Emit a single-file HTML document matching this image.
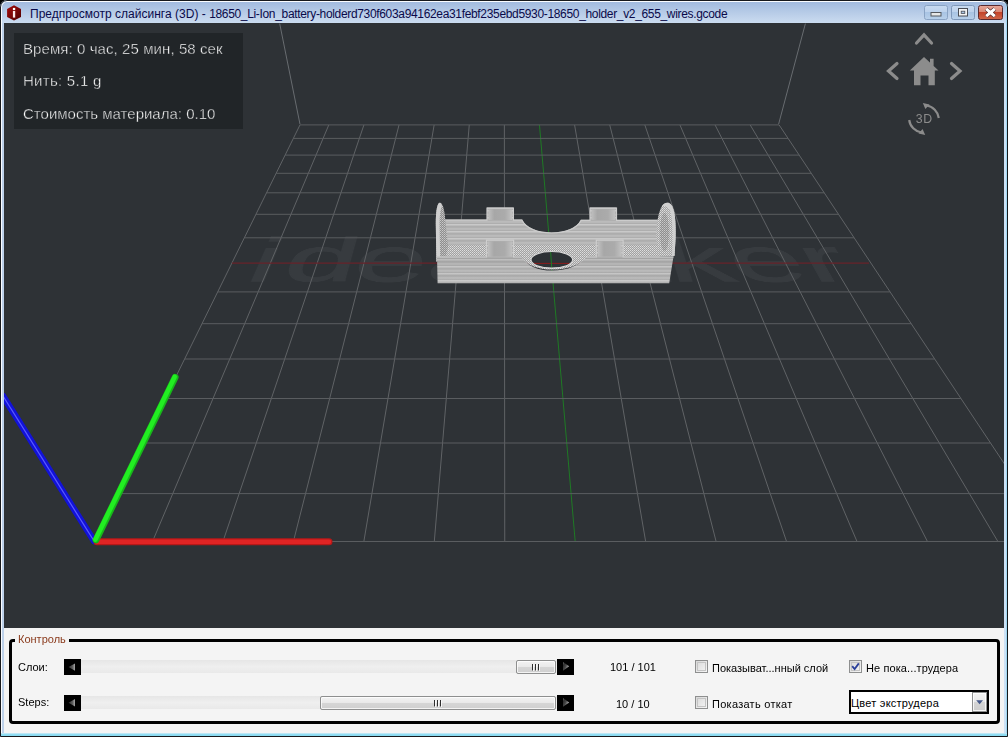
<!DOCTYPE html>
<html><head><meta charset="utf-8">
<style>
*{box-sizing:border-box;margin:0;padding:0}
html,body{width:1008px;height:737px;overflow:hidden;background:#000}
body{font-family:"Liberation Sans",sans-serif;position:relative}
#win{position:absolute;left:0;top:0;width:1008px;height:737px;background:#bdd1ea;border-radius:7px 7px 0 0;overflow:hidden}
#frame-dark{position:absolute;left:0;top:0;width:1008px;height:737px;border:1px solid #16181c;border-radius:7px 7px 0 0;pointer-events:none}
#frame-white{position:absolute;left:1px;top:1px;width:1006px;height:735px;border:1px solid #fafcff;border-radius:6px 6px 0 0;border-bottom-color:#7fd4f0;border-right-color:#9fd8f2}
#tbar{position:absolute;left:2px;top:2px;width:1004px;height:21px;background:linear-gradient(#a2bbdf,#b9cde8 55%,#cbdcf0)}
#title{position:absolute;left:30px;top:7px;font-size:12px;line-height:14px;color:#0a0a4a;white-space:nowrap}
#vp{position:absolute;left:4px;top:23px;width:1000px;height:605px;background:#2e3236;overflow:hidden}
#scene{position:absolute;left:-4px;top:-23px}
#info{position:absolute;left:10px;top:10px;width:229px;height:96px;background:#212528}
.il{position:absolute;left:9px;color:#fff;font-size:15px;line-height:17px;white-space:nowrap;-webkit-text-stroke:.4px #212528}
#panel{position:absolute;left:4px;top:628px;width:1000px;height:105px;background:#f4f4f4}
#bot{position:absolute;left:1px;top:733px;width:1006px;height:3px;background:linear-gradient(#d8edf7,#93ddf2 40%,#86d9f0)}
#gb{position:absolute;left:9px;top:639px;width:991px;height:85px;border:3px solid #000;border-radius:4px}
#gbt{position:absolute;left:15px;top:632px;width:54px;height:14px;background:#f4f4f4;color:#8a3a1c;font-size:11px;line-height:14px;padding-left:3px;white-space:nowrap}
.lb{position:absolute;font-size:11px;line-height:13px;color:#000;white-space:nowrap}
.ab{position:absolute;width:17px;height:16px;background:#000}
.trk{position:absolute;height:13px;background:linear-gradient(#e6e6e6,#efefef 50%,#e9e9e9)}
.hd{position:absolute;height:14px;border:1px solid #8e8f8f;border-radius:2px;box-shadow:inset 0 0 0 1px rgba(255,255,255,.75);background:linear-gradient(#f3f3f3,#e9e9e9 48%,#d6d6d6 52%,#cfcfcf)}
.cb{position:absolute;width:13px;height:13px;border:1px solid #8e8f8f;background:linear-gradient(135deg,#d8d8d8,#f6f6f6)}
.cb i{position:absolute;left:1px;top:1px;width:9px;height:9px;border:1px solid #c4c4c4;display:block}
</style></head><body>
<div id="win">
<div id="tbar"></div>
<div id="frame-white"></div>
<div id="frame-dark"></div>
<svg style="position:absolute;left:6px;top:4px" width="16" height="18" viewBox="0 0 16 18"><defs><linearGradient id="ic" x1="0" y1="0" x2="1" y2="1"><stop offset="0" stop-color="#a80c0c"/><stop offset="1" stop-color="#4c0000"/></linearGradient></defs><polygon points="8,1.2 15,5 15,13 8,16.6 1.1,13 1.1,5" fill="url(#ic)"/><rect x="6.9" y="7" width="2.3" height="6.6" fill="#fbeaea"/><rect x="6.9" y="3.9" width="2.3" height="2.2" fill="#fff"/></svg>
<div id="title"><span id="ta" style="letter-spacing:.02px">Предпросмотр слайсинга (3D) - </span><span id="tb" style="letter-spacing:-.334px">18650_Li-Ion_battery-holderd730f603a94162ea31febf235ebd5930-18650_holder_v2_655_wires.gcode</span></div>
<!-- caption buttons -->
<svg style="position:absolute;left:924px;top:5px" width="80" height="16" viewBox="0 0 80 16">
<defs><linearGradient id="bb" x1="0" y1="0" x2="0" y2="1"><stop offset="0" stop-color="#c9dbf0"/><stop offset=".5" stop-color="#bcd1ec"/><stop offset=".5" stop-color="#a9c4e4"/><stop offset="1" stop-color="#b9d0ea"/></linearGradient>
<linearGradient id="rb" x1="0" y1="0" x2="0" y2="1"><stop offset="0" stop-color="#e7a99b"/><stop offset=".5" stop-color="#d98470"/><stop offset=".5" stop-color="#c4442a"/><stop offset="1" stop-color="#d0674a"/></linearGradient></defs>
<rect x="0.5" y="0.5" width="23" height="14" rx="2" fill="url(#bb)" stroke="#8aa3c4"/>
<rect x="7" y="7.5" width="10" height="3.5" fill="#e8e8e8" stroke="#55585e" stroke-width="1"/>
<rect x="27.5" y="0.5" width="23" height="14" rx="2" fill="url(#bb)" stroke="#7f98ba"/>
<rect x="34.5" y="3.5" width="9" height="7.5" fill="#f4f4f4" stroke="#4a4d55" stroke-width="1"/><rect x="37.2" y="6.2" width="3.6" height="2.2" fill="#a9c4e4" stroke="#4a4d55" stroke-width=".8"/>
<rect x="54.5" y="0.5" width="24" height="14" rx="2" fill="url(#rb)" stroke="#5a2a2e"/>
<path d="M62.2 3.8 L70.8 11.2 M70.8 3.8 L62.2 11.2" stroke="#5a3030" stroke-width="4.4"/><path d="M62.2 3.8 L70.8 11.2 M70.8 3.8 L62.2 11.2" stroke="#fff" stroke-width="2.9"/>
</svg>

<div id="vp">
<div id="wmwrap" style="position:absolute;left:-4px;top:-23px;width:1008px;height:737px"><div id="wm3" style="position:absolute;left:0;top:0;width:1100px;height:230px;transform-origin:0 0;transform:matrix3d(1,0,0,0, -0.522280,0.299482,0,-0.00103627, 0,0,1,0, 327.6000,353.6500,0,1.6500)"><svg width="1100" height="230" viewBox="0 0 1100 230" style="position:absolute;left:0;top:0;overflow:visible"><text id="wmt" x="0" y="0" transform="translate(123.6,186.5) scale(1.184,1)" font-family="Liberation Sans" font-size="165" fill="#373b3f" stroke="#373b3f" stroke-width="1.5">i<tspan dx="7.5">d</tspan><tspan dx="-4">ea</tspan><tspan dx="-18">Maker</tspan></text></svg></div></div>
<svg id="scene" width="1008" height="737" viewBox="0 0 1008 737" shape-rendering="auto">
<g stroke-width="1" fill="none">
<!-- walls -->
<line x1="300" y1="124.3" x2="279.7" y2="23.6" stroke="#686c70"/>
<line x1="778.6" y1="124.2" x2="805.4" y2="23.6" stroke="#686c70"/>
<line x1="300.00" y1="124.90" x2="94.67" y2="541.50" stroke="#606366"/>
<line x1="328.82" y1="124.90" x2="152.50" y2="541.50" stroke="#606366"/>
<line x1="363.93" y1="124.90" x2="222.95" y2="541.50" stroke="#606366"/>
<line x1="399.04" y1="124.90" x2="293.40" y2="541.50" stroke="#606366"/>
<line x1="434.15" y1="124.90" x2="363.85" y2="541.50" stroke="#606366"/>
<line x1="469.26" y1="124.90" x2="434.30" y2="541.50" stroke="#606366"/>
<line x1="504.37" y1="124.90" x2="504.75" y2="541.50" stroke="#606366"/>
<line x1="539.48" y1="124.90" x2="575.20" y2="541.50" stroke="#1f7a25"/>
<line x1="574.59" y1="124.90" x2="645.65" y2="541.50" stroke="#606366"/>
<line x1="609.71" y1="124.90" x2="716.10" y2="541.50" stroke="#606366"/>
<line x1="644.82" y1="124.90" x2="786.55" y2="541.50" stroke="#606366"/>
<line x1="679.93" y1="124.90" x2="857.00" y2="541.50" stroke="#606366"/>
<line x1="715.04" y1="124.90" x2="927.45" y2="541.50" stroke="#606366"/>
<line x1="750.15" y1="124.90" x2="997.90" y2="541.50" stroke="#606366"/>
<line x1="779.10" y1="124.90" x2="1055.99" y2="541.50" stroke="#606366"/>
<line x1="300.00" y1="124.90" x2="779.10" y2="124.90" stroke="#5a5d60"/>
<line x1="293.35" y1="138.40" x2="788.07" y2="138.40" stroke="#5a5d60"/>
<line x1="285.12" y1="155.10" x2="799.17" y2="155.10" stroke="#5a5d60"/>
<line x1="276.14" y1="173.30" x2="811.27" y2="173.30" stroke="#5a5d60"/>
<line x1="266.53" y1="192.80" x2="824.23" y2="192.80" stroke="#5a5d60"/>
<line x1="255.94" y1="214.30" x2="838.52" y2="214.30" stroke="#5a5d60"/>
<line x1="244.35" y1="237.80" x2="854.14" y2="237.80" stroke="#5a5d60"/>
<line x1="217.69" y1="291.90" x2="890.10" y2="291.90" stroke="#5a5d60"/>
<line x1="202.02" y1="323.70" x2="911.23" y2="323.70" stroke="#5a5d60"/>
<line x1="184.62" y1="359.00" x2="934.70" y2="359.00" stroke="#5a5d60"/>
<line x1="165.15" y1="398.50" x2="960.95" y2="398.50" stroke="#5a5d60"/>
<line x1="143.22" y1="443.00" x2="990.53" y2="443.00" stroke="#5a5d60"/>
<line x1="118.28" y1="493.60" x2="1024.16" y2="493.60" stroke="#5a5d60"/>
<line x1="94.67" y1="541.50" x2="1055.99" y2="541.50" stroke="#5a5d60"/>
</g>
<line x1="232" y1="263.10" x2="869" y2="263.10" stroke="#68232a" stroke-width="1.3"/>
<!--MODEL-START-->
<defs>
<pattern id="str" width="8" height="7" patternUnits="userSpaceOnUse"><rect width="8" height="7" fill="#b7b7b7"/><rect y="0" width="8" height="1.3" fill="#c9c9c9"/><rect y="2.4" width="8" height="1" fill="#a6a6a6"/><rect y="4.6" width="8" height="1" fill="#c1c1c1"/><rect y="5.8" width="8" height=".9" fill="#ababab"/></pattern>
<pattern id="msh" width="2" height="2" patternUnits="userSpaceOnUse"><rect width="2" height="2" fill="#a2a2a2"/><rect width="1" height="1" fill="#dedede"/><rect x="1" y="1" width="1" height="1" fill="#cccccc"/></pattern>
<pattern id="mshd" width="2" height="2" patternUnits="userSpaceOnUse"><rect width="2" height="2" fill="#8e8e8e"/><rect width="1" height="1" fill="#c8c8c8"/><rect x="1" y="1" width="1" height="1" fill="#b4b4b4"/></pattern>
<linearGradient id="tabg" x1="0" y1="0" x2="1" y2="0"><stop offset="0" stop-color="#bfbfbf"/><stop offset=".25" stop-color="#a7a7a7"/><stop offset=".7" stop-color="#ababab"/><stop offset="1" stop-color="#c1c1c1"/></linearGradient>
<linearGradient id="fw" x1="0" y1="0" x2="0" y2="1"><stop offset="0" stop-color="#000" stop-opacity=".07"/><stop offset=".5" stop-color="#000" stop-opacity="0"/><stop offset="1" stop-color="#fff" stop-opacity=".10"/></linearGradient>
</defs>
<g id="model">
<!-- back wall -->
<path id="bw" d="M444 219.6 H487 V207.6 H513.4 V219.6 H522 C526 228 538 232.4 551.5 232.4 C565 232.4 577 228 581 219.8 H590 V207.6 H616.5 V219.8 H658 V246 H444 Z" fill="url(#str)"/>
<rect x="488.5" y="209.5" width="23.5" height="10.5" fill="url(#tabg)"/>
<rect x="591.5" y="209.5" width="23.5" height="10.5" fill="url(#tabg)"/>
<path d="M444 220.2 H487 V208.2 H513.4 V220.2 H522 C526 228.6 538 233 551.5 233 C565 233 577 228.6 581 220.4 H590 V208.2 H616.5 V220.4 H658" fill="none" stroke="#cccccc" stroke-width="1.2"/>
<!-- floor mesh -->
<rect x="444" y="244.8" width="216" height="12" fill="url(#msh)"/>
<!-- left end cap -->
<path d="M436.4 262 L435.8 224 C435.8 210 437.5 202.8 439.8 202.8 C442.6 202.8 444.4 209 445.2 219 L448 246 L446 256.5 L440 258 Z" fill="url(#mshd)"/>
<path d="M436.4 262 L435.8 224 C435.8 210 437.5 202.8 439.8 202.8 C441 202.8 441.6 204 442 206 C440.4 209 439.6 216 439.6 226 L440.2 258 Z" fill="#cfcfcf"/>
<!-- right end cap -->
<path d="M657 246 C655.5 232 657 214 662 206 C664.5 202.4 668.5 201.8 671 204.5 C675 209 676 222 675.6 238 L674.5 256 L660 256.5 Z" fill="url(#msh)"/>
<ellipse cx="664.5" cy="232" rx="4.6" ry="19" fill="url(#mshd)"/>
<path d="M662 206 C664.5 202.4 668.5 201.8 671 204.5 C675 209 676 222 675.6 238 L674.5 256 L672 256 C673 240 673 222 670.5 212 C669 207 665 205.5 662 206 Z" fill="#d0d0d0"/>
<!-- front wall -->
<path id="fwp" d="M437 256.4 H486.5 V239.5 H513.6 V256.4 H522 C527 266 538 270.5 552 270.5 C568 270.5 580 265 586 256.4 H596.3 V239.5 H623.1 V256.4 H673.5 L669.2 283.3 H437.6 Z" fill="url(#str)"/>
<path d="M437 256.4 H673.5 L669.2 283.3 H437.6 Z" fill="url(#fw)"/>
<rect x="488" y="241.5" width="24" height="15" fill="url(#tabg)"/>
<rect x="598" y="241.5" width="23.5" height="15" fill="url(#tabg)"/>
<path d="M437 257 H486.5 V240.1 H513.6 V257 H522 M586 257 H596.3 V240.1 H623.1 V257 H673.5" fill="none" stroke="#cecece" stroke-width="1.2"/>
<!-- notch with mesh and oval hole -->
<path d="M521 245 H587 V256.4 C580 265 568 269.5 552 269.5 C538 269.5 527 265.5 521 256.4 Z" fill="url(#msh)"/>
<ellipse cx="551.8" cy="259.8" rx="20.8" ry="8.3" fill="#2e3236"/>
<clipPath id="ovc"><ellipse cx="551.8" cy="259.8" rx="20.4" ry="7.9"/></clipPath>
<g clip-path="url(#ovc)"><line x1="520" y1="263.4" x2="580" y2="263.4" stroke="#8a1c1c"/><line x1="550.2" y1="245" x2="552.2" y2="275" stroke="#1f7a25"/></g>
<ellipse cx="551.8" cy="259.8" rx="20.8" ry="8.3" fill="none" stroke="#d8d8d8" stroke-width="1.1"/>
</g>
<!--MODEL-END-->
<!-- axes -->
<line x1="94" y1="541" x2="3" y2="396" stroke="#1212d8" stroke-width="6.5" stroke-linecap="round"/>
<line x1="94" y1="541" x2="3" y2="396" stroke="#5a5aff" stroke-width="1.2"/>
<line x1="97" y1="541.7" x2="329" y2="541.7" stroke="#b81818" stroke-width="7" stroke-linecap="round"/>
<line x1="97" y1="541.7" x2="329" y2="541.7" stroke="#e02424" stroke-width="4.4" stroke-linecap="round"/>
<line x1="96" y1="540" x2="175.2" y2="377.2" stroke="#18b81a" stroke-width="6.8" stroke-linecap="round"/>
<line x1="95.4" y1="539.6" x2="174.6" y2="376.9" stroke="#22ee22" stroke-width="4.6" stroke-linecap="round"/>
<!-- nav icons -->
<g fill="none" stroke="#8c8c8c" stroke-width="3.2" stroke-linecap="round" stroke-linejoin="miter">
<polyline points="916.5,43 924,34.8 931.5,43"/>
<polyline points="897,63.5 888.5,71 897,78.5"/>
<polyline points="951.5,63.5 960,71 951.5,78.5"/>
</g>
<path d="M924 57 L938.5 70.5 L934.8 70.5 L934.8 85.3 L928.5 85.3 L928.5 75.5 L920.5 75.5 L920.5 85.3 L914 85.3 L914 70.5 L909.8 70.5 Z M930 58.8 L933.6 58.8 L933.6 67 L930 64 Z" fill="#8c8c8c"/>
<g fill="none" stroke="#8c8c8c" stroke-width="2.2">
<path d="M926.5 105.5 A14.5 14.5 0 0 1 938.8 118"/>
<path d="M921.5 132.5 A14.5 14.5 0 0 1 909.2 120"/>
</g>
<path d="M922.8 103 L929.5 104.4 L925.4 109 Z" fill="#8c8c8c"/>
<path d="M925.2 135 L918.5 133.6 L922.6 129 Z" fill="#8c8c8c"/>
<text x="924.3" y="123.4" font-family="Liberation Sans" font-size="12.3" letter-spacing=".7" fill="#8c8c8c" text-anchor="middle">3D</text>
</svg>
<div id="info">
<div class="il" style="top:7px;letter-spacing:.08px" id="l1">Время: 0 час, 25 мин, 58 сек</div>
<div class="il" style="top:39px;letter-spacing:.27px" id="l2">Нить: 5.1 g</div>
<div class="il" style="top:72px" id="l3">Стоимость материала: 0.10</div>
</div>
</div>

<div style="position:absolute;left:1004px;top:23px;width:2px;height:710px;background:#cde2f6"></div><div id="panel"></div><div id="bot"></div>
<div id="gb"></div>
<div id="gbt">Контроль</div>
<div class="lb" style="left:18px;top:661px" id="t1">Слои:</div>
<div class="lb" style="left:18px;top:696px" id="t2">Steps:</div>
<!-- slider 1 -->
<div class="trk" style="left:81px;top:660px;width:476px"></div>
<div class="ab" style="left:64px;top:659px"></div>
<div class="ab" style="left:557px;top:659px"></div>
<div class="hd" style="left:516px;top:660px;width:40px"></div>
<!-- slider 2 -->
<div class="trk" style="left:81px;top:696px;width:476px"></div>
<div class="ab" style="left:64px;top:695px"></div>
<div class="ab" style="left:557px;top:695px"></div>
<div class="hd" style="left:320px;top:696px;width:236px"></div>
<svg style="position:absolute;left:0;top:640px" width="1008" height="90" viewBox="0 640 1008 90">
<defs><linearGradient id="tl" x1="0" y1="0" x2="1" y2="0"><stop offset="0" stop-color="#2e2e2e"/><stop offset=".6" stop-color="#5a5a5a"/><stop offset="1" stop-color="#a8a8a8"/></linearGradient><linearGradient id="tr" x1="0" y1="0" x2="1" y2=".6"><stop offset="0" stop-color="#7c7c7c"/><stop offset=".22" stop-color="#2c2c2c"/><stop offset=".55" stop-color="#4a4a4a"/><stop offset="1" stop-color="#c0c0c0"/></linearGradient></defs>
<g fill="url(#tl)"><polygon points="68.5,667.1 75,663.5 75,670.7"/><polygon points="68.5,702.7 75,699 75,706.4"/></g><g fill="url(#tr)"><polygon points="563,662 569.2,666.3 563,670.7"/><polygon points="563,698 569.2,702.4 563,706.7"/></g>
<g stroke="#2e2e2e" stroke-width="1"><path d="M532.5 664v6.4M535.5 664v6.4M538.5 664v6.4"/><path d="M434.5 700v6.4M437.5 700v6.4M440.5 700v6.4"/></g><g stroke="#fff" stroke-width="1" opacity=".8"><path d="M533.5 664.6v6.4M536.5 664.6v6.4M539.5 664.6v6.4"/><path d="M435.5 700.6v6.4M438.5 700.6v6.4M441.5 700.6v6.4"/></g>
</svg>
<div class="lb" style="left:610px;top:661px" id="n1">101 / 101</div>
<div class="lb" style="left:616px;top:698px" id="n2">10 / 10</div>
<div class="cb" style="left:695px;top:660px"><i></i></div>
<div class="lb" style="left:712px;top:662px" id="c1">Показыват...нный слой</div>
<div class="cb" style="left:695px;top:696px"><i></i></div>
<div class="lb" style="left:712px;top:698px;letter-spacing:.27px" id="c2">Показать откат</div>
<div class="cb" style="left:849px;top:660px"><i></i><svg style="position:absolute;left:1px;top:1px" width="9" height="9" viewBox="0 0 9 9"><path d="M1.2 4.2 L3.6 7 L7.8 1.4" fill="none" stroke="#2a3f9a" stroke-width="1.8"/></svg></div>
<div class="lb" style="left:866px;top:662px;letter-spacing:.1px" id="c3">Не пока...трудера</div>
<!-- combo -->
<div style="position:absolute;left:849px;top:690px;width:140px;height:24px;border:2px solid #000;background:#fff"></div>
<div class="lb" style="left:851px;top:697px;letter-spacing:.22px" id="cbt">Цвет экструдера</div>
<div style="position:absolute;left:972px;top:692px;width:15px;height:20px;border:1px solid #8e8f8f;box-shadow:inset 0 0 0 1px rgba(255,255,255,.8);background:linear-gradient(#f2f2f2,#e8e8e8 48%,#d4d4d4 52%,#cdcdcd)"></div>
<svg style="position:absolute;left:975px;top:699px" width="10" height="6" viewBox="0 0 10 6"><polygon points="1.2,1.3 8,1.3 4.6,5.2" fill="#46598a"/></svg>
</div>
</body></html>
